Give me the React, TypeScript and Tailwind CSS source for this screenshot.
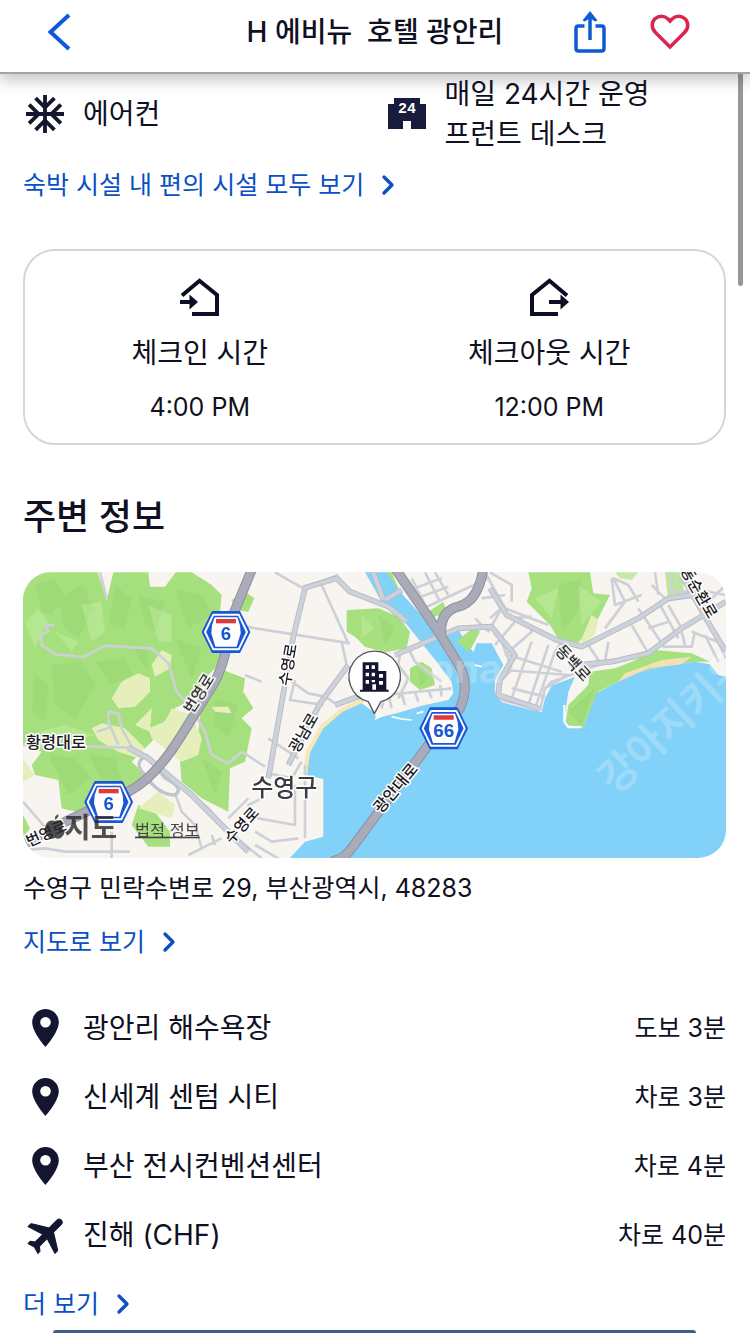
// src/app/hotels/[id]/page.tsx
import { ChevronRight } from 'lucide-react'
import type { ReactNode } from 'react'

const SNOW =
  'M22 11h-4.17l3.24-3.24-1.41-1.42L15 11h-2V9l4.66-4.66-1.42-1.41L13 6.17V2h-2v4.17L7.76 2.93 6.34 4.34 11 9v2H9L4.34 6.34 2.93 7.76 6.17 11H2v2h4.17l-3.24 3.24 1.41 1.42L9 13h2v2l-4.66 4.66 1.42 1.41L11 17.83V22h2v-4.17l3.24 3.24 1.42-1.41L13 15v-2h2l4.66 4.66 1.41-1.42L17.83 13H22z'
const PIN =
  'M12 2C8.13 2 5 5.13 5 9c0 5.25 7 13 7 13s7-7.75 7-13c0-3.87-3.13-7-7-7zm0 9.8a2.8 2.8 0 1 1 0-5.6 2.8 2.8 0 0 1 0 5.6z'
const PLANE =
  'M21 16v-1.6c0-.3-.2-.6-.4-.7L13 9V3.5c0-.83-.67-1.5-1.5-1.5S10 2.67 10 3.5V9l-7.6 4.7c-.2.1-.4.4-.4.7V16l8-2.5V19l-2 1.5V22l3.5-1 3.5 1v-1.5L13 19v-5.5l8 2.5z'

const places = [
  { name: '광안리 해수욕장', time: '도보 3분', icon: 'pin' },
  { name: '신세계 센텀 시티', time: '차로 3분', icon: 'pin' },
  { name: '부산 전시컨벤션센터', time: '차로 4분', icon: 'pin' },
  { name: '진해 (CHF)', time: '차로 40분', icon: 'plane' },
]

// [x, y, rotation, size, text]
const roadLabels: [number, number, number, number, string][] = [
  [123, 548, 0, 49, '황령대로'],
  [565, 394, -58, 46, '번영로'],
  [100, 820, -24, 46, '번영로'],
  [692, 792, -48, 46, '수영로'],
  [835, 302, -80, 46, '수영로'],
  [880, 512, -60, 46, '광남로'],
  [1155, 680, -50, 48, '광안대로'],
  [1663, 304, 48, 46, '동백로'],
  [2038, 90, 60, 46, '동순환로'],
]

const minorRoads = [
  'M118 180 L90 182 100 200 80 208 80 240 120 268 205 276 270 242 410 250 460 295 485 380 530 430 570 500 590 570 640 595 680 560 750 605',
  'M24 540 L220 544 340 548 390 575 440 620 530 690 580 730 640 800 740 880',
  'M310 540 L280 470 280 440 310 445 320 490 350 545',
  'M245 500 L290 485',
  'M255 22 L275 100',
  'M480 685 L500 740 540 780 560 850 M520 870 L620 820 M590 810 L600 840',
  'M24 710 L110 810 M24 855 L90 850 150 860 345 860 M290 800 V880',
  'M690 185 L1005 235 M690 330 L740 350',
  'M1000 235 L920 60 M780 22 L865 70 970 30',
  'M995 300 L980 230',
  'M830 350 L880 385 930 395 960 415 M840 345 L825 405 925 420',
  'M760 625 L830 640 860 590 M760 520 L850 580',
  'M740 700 L700 720 730 760 840 780 840 660 M720 800 L770 830 850 820 M720 840 L790 880 M870 600 V820 M700 700 L640 760',
  'M1155 270 L1150 300 1180 340 1150 400 M1180 250 L1200 290 1280 350 M1100 430 L1110 390 1310 370 M1130 430 L1120 390 M1170 420 L1160 385 M1210 410 L1200 380 M1250 400 L1240 375 M1280 395 L1275 360',
  'M1170 80 L1280 40 M1190 105 L1300 65 M1215 135 L1420 40 M1190 40 L1240 140 M1230 22 L1275 110 M1260 22 L1300 90',
  'M1410 22 L1470 130 1600 180 M1380 160 L1420 200 1460 130 M1400 100 L1470 90',
  'M1425 160 L1470 120 M1490 110 V60 L1425 22 M1490 160 L1550 155',
  'M1440 240 L1500 170 M1470 270 L1550 200 1545 180 M1490 400 L1550 230 M1540 420 L1600 240 M1560 430 L1620 260 1640 230 M1460 230 L1490 310 M1480 270 L1640 320 M1470 315 L1660 330 M1490 370 L1590 395 M1445 360 L1490 315 M1590 370 L1660 330',
  'M1440 380 L1460 405 1575 435 1590 370 1610 350 1750 300 1860 270',
  'M1770 190 L1830 110 1795 40 1840 60 1870 110 M1790 40 L1800 120 1880 90 M1850 180 L1900 265 M1870 130 L1950 250 M1930 110 L1990 220 M1720 240 L1760 300 M1780 230 L1770 290',
  'M1910 60 L1950 100 M1920 22 L1930 90 M1970 22 V80 L2080 80 2130 90 M1960 120 L2000 190 M1950 245 L2030 245 2040 200 M2000 200 L2010 240',
  'M2030 200 L2120 235 M2070 210 L2110 290 M2085 180 L2133 280 M2133 60 L2060 130 M1900 190 L1960 170',
]

const streets = [
  'M870 70 L835 215 760 640',
  'M865 70 L965 40 1005 80 1120 125 1175 170',
  'M1000 300 L915 415 820 600',
  'M960 420 L1100 370 M1140 270 L1330 190 1430 185 1450 210',
  'M1110 105 L1160 75',
  'M1075 22 L1105 105',
  'M1425 70 L1475 150 1625 225 1700 245 1870 160 1960 100 2050 88',
  'M1440 200 L1500 270 1455 345 1450 390 1575 432',
  'M1690 300 L1790 290 1900 265 2000 190 2133 110',
  'M2000 30 L2090 190 2133 260',
]

const highways = [
  'M712 10 650 160 Q635 280 600 350 L500 510 Q420 640 340 680 L110 790 24 840',
  'M1140 10 1270 200 1320 280 Q1370 350 1335 430 L1240 540 1010 850 Q990 880 950 890',
  'M1405 10 Q1390 110 1330 125 Q1270 140 1280 215',
]

function House({ out = false }: { out?: boolean }) {
  return (
    <svg viewBox="0 0 40 40" className="h-10 w-10" fill="none" stroke="#0b0d24" strokeWidth="4">
      {out ? (
        <>
          <path d="M38 18.500 20.500 3.800 3 18V37H29" />
          <path d="M20 25H34" />
          <path d="M31.500 17.500 40 25 31.500 32.500Z" fill="#0b0d24" stroke="none" />
        </>
      ) : (
        <>
          <path d="M2 18.500 19.500 3.800 37 18V37H12" />
          <path d="M0 25H12" />
          <path d="M9.500 17.500 18 25 9.500 32.500Z" fill="#0b0d24" stroke="none" />
        </>
      )}
    </svg>
  )
}

function MoreLink({ href, children }: { href: string; children: ReactNode }) {
  return (
    <a href={href} className="flex w-fit items-center gap-2 text-[25px] leading-9 text-[#0a4fc4]">
      {children}
      <ChevronRight className="size-8" strokeWidth={2.5} />
    </a>
  )
}

function Shield({ x, y, label }: { x: number; y: number; label: string }) {
  return (
    <g transform={`translate(${x} ${y})`}>
      <path d="M-40-60H40L70 0 40 60H-40L-70 0Z" fill="#1857d6" stroke="#1857d6" strokeWidth="6" strokeLinejoin="round" />
      <path d="M-38-52H38L63 0 38 52H-38L-63 0Z" fill="none" stroke="#fff" strokeWidth="6" strokeLinejoin="round" />
      <path d="M-34-44H34L42-20 44 4 32 44H-32L-44 4-42-20Z" fill="#fff" />
      <path d="M-30-39H30V-26H-30Z" fill="#e03a3a" />
      <text
        y="25"
        textAnchor="middle"
        fontFamily="'Liberation Sans', sans-serif"
        fontSize="56"
        fontWeight="700"
        fill="#1857d6"
      >
        {label}
      </text>
    </g>
  )
}

function AreaMap() {
  return (
    <svg viewBox="24 21 2109 858" className="block h-auto w-full rounded-[28px]" role="img" aria-label="지도">
      <path d="M24 21H2133V879H24Z" fill="#f8f5f0" />

      {/* hills and parks */}
      <g fill="#a7e07f">
        <path d="M24 22H248L275 105 295 22H400L405 65 450 65 482 22H530L590 60 620 90 615 140 640 200 620 290 580 330 540 400 480 430 440 480 410 530 350 590 400 640 330 690 200 745 140 730 130 645 60 630 50 600 80 560 24 540Z" />
        <path d="M560 400 610 310 690 340 685 380 715 430 680 460 710 490 690 590 645 610 640 740 560 700 500 650 495 590 530 560 550 500Z" />
        <path d="M650 105 690 80 718 100 700 140 660 135Z" />
        <path d="M24 750 45 790 24 820Z M370 720 420 740 465 800 465 845 400 845 350 780Z" />
        <path d="M995 135 1090 130 1150 155 1185 200 1175 250 1110 262 1050 245 1020 215 995 200Z" />
        <path d="M1185 310 1220 290 1250 310 1260 360 1215 375 1185 350Z" />
        <path d="M1540 22H1725L1735 85 1785 90 1750 160 1680 245 1640 240 1605 180 1535 110 1550 70Z" />
        <path d="M1725 320 1800 310 1850 290 1920 255 2030 265 2085 290 2040 290 1960 300 1860 325 1800 355 1750 380 1705 487 1650 480 1660 420 1720 360Z" />
        <path d="M1240 140 1285 110 1295 140 1250 160Z M1110 22H1130L1150 70 1135 80Z" />
        <path d="M1950 22H2000L2010 100 1960 110Z" opacity="0.7" />
        <path d="M1800 22H1870L1850 45 1815 40Z" opacity="0.6" />
      </g>

      {/* terrain shading */}
      <g fill="#7fc25a" opacity="0.2">
        <path d="M60 60 120 40 150 100 110 150 80 140Z M130 100 200 60 240 130 190 220 150 190Z M300 60 350 100 330 190 280 170Z M370 90 450 110 420 200 390 180Z M480 70 560 90 590 150 520 190Z" />
        <path d="M110 300 200 290 240 360 180 460 120 420Z M240 290 330 280 350 330 290 360Z M60 330 100 360 90 470 50 440Z M340 230 400 260 400 320Z M480 220 560 250 530 340Z" />
        <path d="M100 570 180 580 230 640 160 690Z M220 570 300 580 320 650 260 640Z M600 400 670 420 640 520 600 480Z M560 580 620 620 600 690Z" />
        <path d="M1630 60 1700 40 1690 140 1640 200Z M1090 150 1140 190 1110 240Z M1660 440 1740 370 1700 480Z M1210 310 1240 340 1215 365Z" />
      </g>
      <g fill="#cdf3ae" opacity="0.35">
        <path d="M30 170 70 130 100 170 60 250Z M200 120 260 110 270 200 230 230Z M400 120 470 150 470 230 430 230Z M120 200 190 230 170 260Z M70 500 150 480 240 510 180 530Z" />
        <path d="M1560 100 1630 70 1610 160Z M1690 60 1760 110 1700 180Z M1040 150 1080 190 1040 220Z" />
      </g>

      {/* clearings */}
      <g fill="#e6eebb">
        <path d="M290 400 320 350 370 325 405 340 405 380 360 425 310 430Z" />
        <path d="M410 300 440 255 470 270 465 310 420 335Z" />
        <path d="M230 490 260 475 330 490 390 550 370 580 310 560 250 525Z" />
        <path d="M470 430 530 450 560 520 550 570 500 590 410 520 400 490 450 470Z" />
        <path d="M370 730 430 680 480 720 470 760Z M590 425 640 425 650 445 600 440Z M360 480 410 430 405 500Z M24 580 60 630 24 650Z" />
        <path d="M1690 245 1730 150 1750 165 1740 210Z" />
      </g>

      {/* sea and river */}
      <path
        d="M1075 440 1085 460 1160 440 1220 422 1300 405 1315 385 1310 350 1265 290 1160 160 1100 110 1050 22H1115L1155 80 1205 135 1270 205 1330 195 1375 262 1385 235 1430 235 1465 300 1440 345 1440 380 1460 412 1580 442 1590 400 1610 362 1680 335 1660 380 1648 460 1660 487 1705 487 1745 385 1800 355 1860 325 1960 300 2040 290 2085 298 2110 330 2133 335V879H825L870 830 925 815V642L870 630 885 560 925 490 980 440 1040 415Z"
        fill="#82d1f8"
      />
      <path d="M870 630 880 560 920 485 980 435 1045 405" fill="none" stroke="#f8e6b4" strokeWidth="12" />
      <path d="M1810 350 1900 310 2000 298 2030 275 1940 285 1830 325Z" fill="#f1e2b4" />
      <path
        d="M1130 455 1160 462 1190 465 M1205 445 1225 440 M1380 300 1400 305 M1080 462 1105 450"
        stroke="#fff"
        strokeWidth="5"
        fill="none"
      />
      <path d="M1648 420 1648 470 1660 487 1700 487" stroke="#fff" strokeWidth="6" fill="none" />
      <path d="M1325 228 1378 185 1395 200 1362 262Z" fill="#a7e07f" />

      <g fill="none" strokeLinejoin="round">
        <g stroke="#cdd1d7" strokeWidth="8">
          {minorRoads.map((d) => (
            <path key={d} d={d} />
          ))}
        </g>
        <g stroke="#b4bac4" strokeWidth="17">
          {streets.map((d) => (
            <path key={d} d={d} />
          ))}
        </g>
        <g stroke="#ccd1da" strokeWidth="12">
          {streets.map((d) => (
            <path key={d} d={d} />
          ))}
        </g>
        <path d="M400 570 Q350 590 390 630 Q430 690 480 690 Q510 670 450 640 L400 575" stroke="#bfc5ce" strokeWidth="10" />
        <path d="M340 548 L400 580 530 690 640 800 700 860" stroke="#b4bac4" strokeWidth="18" />
        <path d="M340 548 L400 580 530 690 640 800 700 860" stroke="#ccd1da" strokeWidth="13" />
      </g>

      {/* highways */}
      <g fill="none" strokeLinejoin="round">
        <g stroke="#8d8f9d" strokeWidth="30">
          {highways.map((d) => (
            <path key={d} d={d} />
          ))}
        </g>
        <g stroke="#a9abb8" strokeWidth="24">
          {highways.map((d) => (
            <path key={d} d={d} />
          ))}
        </g>
      </g>

      {/* watermarks */}
      <g fill="#fff" opacity="0.22" fontWeight="700">
        <text transform="translate(1800 692) rotate(-43)" fontSize="122">
          강아지키우
        </text>
        <text x="1462" y="354" fontSize="120" textAnchor="end">
          ona
        </text>
      </g>

      <g
        textAnchor="middle"
        fontWeight="500"
        fill="#1b1b1f"
        stroke="#fff"
        strokeWidth="9"
        strokeLinejoin="round"
        paintOrder="stroke"
      >
        {roadLabels.map(([x, y, angle, size, text]) => (
          <text key={`${x}-${y}`} transform={`translate(${x} ${y}) rotate(${angle})`} fontSize={size}>
            {text}
          </text>
        ))}
        <text x="808" y="692" fontSize="72" fill="#3a3a40">
          수영구
        </text>
      </g>

      <Shield x={633} y={201} label="6" />
      <Shield x={281} y={711} label="6" />
      <Shield x={1286} y={490} label="66" />

      {/* map provider marks */}
      <g fill="#26262a" opacity="0.8">
        <path d="M120 768Q104 762 94 776 84 794 96 812 106 826 120 818 134 826 144 812 150 802 148 798 136 790 146 774 134 762 120 768ZM120 764Q118 752 130 748 132 758 120 764Z" />
        <text x="148" y="818" fontSize="86" fontWeight="700">
          지도
        </text>
      </g>
      <text x="360" y="812" fontSize="49" fill="#45454a" textDecoration="underline">
        법적 정보
      </text>

      {/* hotel marker */}
      <path d="M1078 446 1060 410A77 77 0 1 1 1098 410Z" fill="#fff" stroke="#55555f" strokeWidth="4" strokeLinejoin="round" />
      <path
        d="M1043 292H1090V318H1114V374H1121V380H1035V374H1043ZM1052 301V312H1062V301ZM1070 301V312H1080V301ZM1052 323V334H1062V323ZM1070 323V334H1080V323ZM1052 345V356H1062V345ZM1070 345V352H1080V345ZM1092 327V338H1104V327ZM1092 348V359H1104V348ZM1072 358V374H1083V358Z"
        fill="#14152f"
        fillRule="evenodd"
      />
    </svg>
  )
}

export default function HotelDetail() {
  return (
    <div className="min-h-screen overflow-x-hidden bg-white font-[Inter,'Noto_Sans_CJK_KR',sans-serif] text-[#0f1022]">
      <header className="relative z-10 grid grid-cols-[1fr_auto_1fr] items-center border-b-2 border-[#a3a3a8] bg-white px-[46px] pb-2 shadow-[0_6px_14px_rgba(40,40,60,0.28)]">
        <button aria-label="뒤로" className="w-fit">
          <svg viewBox="0 0 26 40" className="h-10 w-[26px]" fill="none" stroke="#0d5ad6" strokeWidth="4">
            <path d="M23 3 4.500 20 23 37" />
          </svg>
        </button>
        <h1 className="text-[28px] leading-16 font-medium whitespace-pre">H 에비뉴  호텔 광안리</h1>
        <div className="flex items-center justify-end gap-11 pr-[14px]">
          <button aria-label="공유">
            <svg viewBox="0 0 32 42" className="h-[42px] w-8" fill="none" stroke="#0d5ad6" strokeWidth="3.500">
              <path d="M10.500 15H4.500Q2 15 2 17.500V37.500Q2 40 4.500 40H27.500Q30 40 30 37.500V17.500Q30 15 27.500 15H21.500" />
              <path d="M16 29V4" />
              <path d="M8.500 9.500 16 0 23.500 9.500 21 10.500 16 7 11 10.500Z" fill="#0d5ad6" stroke="none" />
            </svg>
          </button>
          <button aria-label="찜하기">
            <svg viewBox="0 0 40 36" className="h-9 w-10" fill="none" stroke="#d9264f" strokeWidth="3.500">
              <path d="M20 33 5.500 18.500C1 14 1.500 8 5 4.800 9 1.200 14.500 1.500 18 5L20 7.200 22 5C25.500 1.500 31 1.200 35 4.800 38.500 8 39 14 34.500 18.500Z" />
            </svg>
          </button>
        </div>
      </header>

      <div className="absolute top-[74px] right-[7px] h-[212px] w-[5px] rounded-b-full bg-[#97979b]" />

      <main className="pr-6 pl-[23px]">
        <ul className="mb-[13px] grid grid-cols-2 gap-5 text-[28px] leading-10">
          <li className="flex items-center gap-4">
            <span className="flex w-11 justify-center">
              <svg viewBox="2 2 20 20" className="size-[38px]" fill="#14152f">
                <path d={SNOW} />
              </svg>
            </span>
            에어컨
          </li>
          <li className="flex items-center gap-4">
            <span className="flex w-11 shrink-0 justify-center">
              <svg viewBox="0 0 40 32" className="h-8 w-10" fill="#181b3c">
                <path d="M7 0H33V6H39V31H24V23H16V31H1V6H7Z" />
                <text
                  x="20"
                  y="15"
                  textAnchor="middle"
                  fontFamily="'Liberation Mono', monospace"
                  fontSize="15"
                  fontWeight="700"
                  fill="#fff"
                >
                  24
                </text>
              </svg>
            </span>
            <span>
              매일 24시간 운영
              <br />
              프런트 데스크
            </span>
          </li>
        </ul>
        <MoreLink href="#amenities">숙박 시설 내 편의 시설 모두 보기</MoreLink>

        <section className="mt-[46px] grid grid-cols-2 rounded-[32px] border-2 border-[#d6d6d8] pt-[26px] pb-[18px] text-center">
          <div className="flex flex-col items-center gap-4">
            <House />
            <h3 className="text-[28px] leading-10">체크인 시간</h3>
            <p className="text-[25px] leading-9">4:00 PM</p>
          </div>
          <div className="flex flex-col items-center gap-4">
            <House out />
            <h3 className="text-[28px] leading-10">체크아웃 시간</h3>
            <p className="text-[25px] leading-9">12:00 PM</p>
          </div>
        </section>

        <section>
          <h2 className="mt-12 mb-[31px] text-4xl leading-12 font-medium">주변 정보</h2>
          <AreaMap />
          <p className="mt-3 mb-[18px] text-[25px] leading-9">수영구 민락수변로 29, 부산광역시, 48283</p>
          <MoreLink href="#map">지도로 보기</MoreLink>

          <ul className="mt-12 mb-[31px] flex flex-col gap-[29px]">
            {places.map((place) => (
              <li key={place.name} className="flex items-center gap-4 text-[28px] leading-10">
                <span className="flex w-11 justify-center">
                  {place.icon === 'pin' ? (
                    <svg viewBox="5 2 14 20" className="h-[38px] w-[27px]" fill="#14152f">
                      <path d={PIN} />
                    </svg>
                  ) : (
                    <svg viewBox="1 3 20 20" className="size-10 rotate-45 overflow-visible" fill="#14152f">
                      <path d={PLANE} stroke="#14152f" strokeWidth="0.5" strokeLinejoin="round" />
                    </svg>
                  )}
                </span>
                <span className="flex-1">{place.name}</span>
                <span className="text-[25px]">{place.time}</span>
              </li>
            ))}
          </ul>
          <MoreLink href="#places">더 보기</MoreLink>
        </section>

        <div className="mx-[30px] mt-2 h-[3px] rounded-t-full bg-[#3f5f92]" />
      </main>
    </div>
  )
}
